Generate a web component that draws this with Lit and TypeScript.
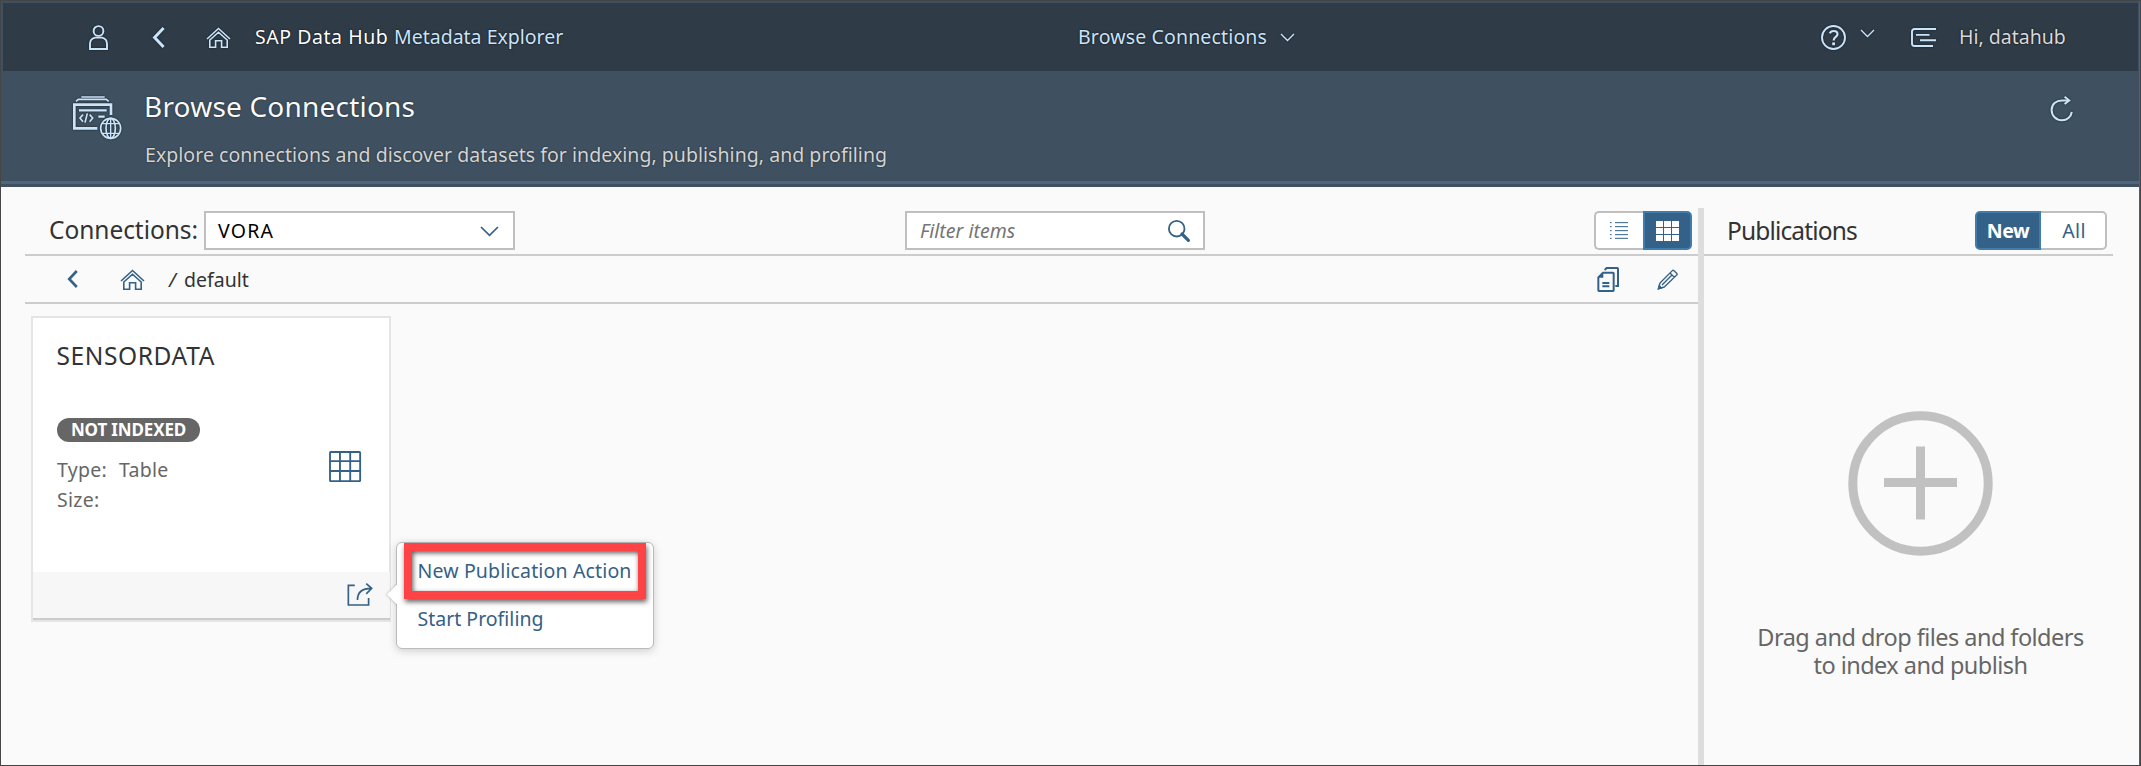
import { LitElement, html, svg, css } from "lit";
import { customElement, property } from "lit/decorators.js";

const home = svg`<path d="M1 12 12.5 1.5 24 12" /><path d="M3.8 13 12.5 5.2 21.2 13V20.2H15.6V13.8H9.6V20.2H3.8Z" />`;
const slim = svg`<path d="M1 1 7.5 7.5 14 1" />`;

const ICONS: Record<string, { w: number; h: number; box: string; sw: number; art: unknown }> = {
  person: { w: 19, h: 25, box: "0 0 19 25", sw: 1.9, art: svg`<circle cx="9.5" cy="6" r="4.9" /><path d="M1 24V19C1 15.6 3 13.2 6 12.6H13C16 13.2 18 15.6 18 19V24Z" />` },
  back: { w: 13, h: 21, box: "0 0 13 21", sw: 3, art: svg`<path d="M11.6 1 2.6 10.5 11.6 20" />` },
  home: { w: 25, h: 21, box: "0 0 25 21", sw: 1.6, art: home },
  down: { w: 15, h: 9, box: "0 0 15 9", sw: 1.4, art: slim },
  help: { w: 25, h: 25, box: "0 0 25 25", sw: 1.9, art: svg`<circle cx="12.5" cy="12.5" r="11.5" /><path d="M8.7 8.4C9.5 6.7 10.9 6 12.6 6 14.9 6 16.5 7.2 16.5 9.2 16.5 11.9 12.6 11.9 12.6 15.4" stroke-width="2.2" /><path d="M12.6 17.4V20.2" stroke-width="2.8" />` },
  menu: { w: 25, h: 19, box: "0 0 25 19", sw: 1.9, art: svg`<path d="M25 1H3.5C2 1 1 2 1 3.5V15.5C1 17 2 18 3.5 18H22M5 6.9H18.5M9 12.2H25" />` },
  refresh: { w: 24, h: 26, box: "0 0 24 26", sw: 2, art: svg`<path d="M21.8 16C21 21 17 24.3 12 24.3 6 24.3 1.6 19.8 1.6 14 1.6 8 6 4.4 12 4.4H18" /><path d="M14.6 .8 19.2 4.4 14.6 8" />` },
  browse: {
    w: 49, h: 44, box: "39 33 147 132", sw: 8,
    art: svg`<path d="M64 36H134M48 49 55 43H139L146 49" stroke-width="5" /><path d="M112 130H43V59H153V90" /><path d="M57 76H140M115 95H134" stroke-width="7" />
      <path d="M69 89 60 99 69 110M89 89 98 99 89 110M82 85 75 113" stroke-width="5" />
      <circle cx="152" cy="130" r="30" stroke-width="5" /><ellipse cx="152" cy="130" rx="14" ry="30" stroke-width="5" /><path d="M127 116H177M127 145H177M152 100V160" stroke-width="4" />`,
  },
  chevron: { w: 19, h: 11, box: "0 0 19 11", sw: 1.7, art: svg`<path d="M1 1 9.5 9.4 18 1" />` },
  search: { w: 22, h: 22, box: "0 0 22 22", sw: 1.8, art: svg`<circle cx="8.7" cy="8.7" r="7.8" /><path d="M14 14 20.4 20.4" stroke-width="3.2" stroke-linecap="round" />` },
  crumbBack: { w: 11, h: 18, box: "0 0 11 18", sw: 2.6, art: svg`<path d="M9.8 1 2.2 9 9.8 17" />` },
  list: { w: 18, h: 17, box: "89 55 54 51", sw: 3, art: svg`<path d="M89 57H94M104 57H143M89 69H94M104 69H143M89 81H94M104 81H143M89 93H94M104 93H143M89 104H94M104 104H143" />` },
  tiles: { w: 23, h: 20, box: "0 0 23 20", sw: 0, art: svg`<path class="fill" d="M0 0h7v6H0zM8 0h7v6H8zM16 0h7v6h-7zM0 7h7v6H0zM8 7h7v6H8zM16 7h7v6h-7zM0 14h7v6H0zM8 14h7v6H8zM16 14h7v6h-7z" />` },
  copy: { w: 22, h: 25, box: "50 186 66 75", sw: 6, art: svg`<path d="M54 217 68 203H98Q100 203 100 205V256Q100 258 98 258H56Q54 258 54 256Z" /><path class="fill" d="M52 218 69 201V218Z" /><path d="M73 195 79 189H111Q113 189 113 191V243H105" /><path d="M66 234H87M66 244H87" />` },
  pencil: { w: 21, h: 21, box: "231 192 63 63", sw: 4, art: svg`<path d="M240 234 277 197Q279 194 282 197L290 205Q293 208 290 210L253 246M240 234 235 251 253 246M270 204 283 217M246 240 276 210" /><path class="fill" d="M233 254 237 238 248 250Z" />` },
  table: { w: 32, h: 31, box: "28 33 95 93", sw: 5.5, art: svg`<rect x="31" y="36" width="89.500" height="87.500" rx="2" /><path d="M60.500 35V124M91 35V124M30 63.500H121M30 93H121" />` },
  share: { w: 26, h: 23, box: "81 430 77 68", sw: 5, art: svg`<path d="M104 437H85V495H145V474" /><path d="M112 480C112 460 124 446 153 446M138 432 154 446 138 462" />` },
  plus: { w: 145, h: 145, box: "0 0 145 145", sw: 9, art: svg`<circle cx="72.500" cy="72.500" r="67.700" /><path d="M72.500 35.500V108.500M36 71.500H109" />` },
};

@customElement("ui-icon")
class UiIcon extends LitElement {
  @property() name = "";
  static styles = css`
    :host { display: block; flex: none; }
    svg { display: block; fill: none; stroke: currentColor; overflow: visible; }
    .fill { fill: currentColor; stroke: none; }
  `;
  render() {
    const i = ICONS[this.name];
    return html`<svg width=${i.w} height=${i.h} viewBox=${i.box} stroke-width=${i.sw} preserveAspectRatio="none">${i.art}</svg>`;
  }
}

@customElement("app-root")
class AppRoot extends LitElement {
  static styles = css`
    :host {
      display: flex; flex-direction: column; box-sizing: border-box; width: 2141px; height: 766px;
      border: 1px solid #444648; overflow: hidden; background: #fafafa; box-shadow: inset -1px 0 #1c6db3;
      font: 19.5px/30px "Noto Sans", sans-serif; color: #333; white-space: nowrap;
    }
    * { box-sizing: border-box; }
    .shell { margin-right: 1px; background: #3f5161; padding: 2px 1px 0 2px; height: 186px; display: flex; flex-direction: column; }
    .bar { height: 68px; background: #2f3c48; display: flex; align-items: center; color: #cae4fb; padding: 0 71px 0 86px; text-shadow: 0 0 2px #000; }
    .bar ui-icon, .head ui-icon { filter: drop-shadow(0 0 1px rgba(0, 0, 0, .6)); }
    .g-back { margin-left: 44px; }
    .g-home { margin-left: 41px; }
    .product { margin-left: 24px; width: 823px; letter-spacing: 0; }
    .product b { font-weight: 400; color: #fff; letter-spacing: .55px; }
    .crumb-title { width: 202px; letter-spacing: .15px; }
    .help { margin-left: auto; }
    .help-down { margin: 0 36px 8px 14px; }
    .user { margin-left: 23px; color: #d9d9d9; width: 108px; }
    .head { flex: 1; display: flex; align-items: flex-start; padding: 25px 64px 0 70px; color: #cae4fb; }
    .titles { margin-left: 22px; flex: 1; text-shadow: 0 0 2px rgba(0, 0, 0, .6); }
    h1 { margin: -10px 0 0; font-size: 28px; line-height: 40px; font-weight: 400; color: #fafafa; letter-spacing: .2px; }
    .titles p { margin: 14px 0 0 1px; color: #d3d3d3; letter-spacing: .04px; }
    .stripe { height: 6px; margin: 0 -1px 0 -2px; background: #4e657c; border-bottom: 3px solid #3f5161; }
    .work { flex: 1; display: flex; margin-right: 1px; }
    .main { width: 1697px; padding-left: 24px; }
    .tools { height: 69px; padding: 24px 0 4px; border-bottom: 2px solid #ccc; display: flex; align-items: center; }
    .lbl { font-size: 24.5px; letter-spacing: -.05px; margin-left: 24px; width: 155px; position: relative; top: -1px; }
    .field { height: 39px; border: 2px solid #bfbfbf; background: #fff; display: flex; align-items: center; justify-content: space-between; color: #346187; }
    .select { width: 311px; padding: 2px 14px 0 12px; }
    .select span { color: #000; letter-spacing: 1.2px; position: relative; top: -1px; }
    .filter { width: 300px; margin-left: 390px; padding: 0 13px 0 13px; }
    .filter i { color: #757575; }
    .seg { display: flex; margin-left: auto; height: 39px; color: #346187; }
    .seg div { display: flex; align-items: center; justify-content: center; border: 2px solid #bfbfbf; background: #fff; border-radius: 5px; }
    .seg .first { border-top-right-radius: 0; border-bottom-right-radius: 0; }
    .seg .last { border-top-left-radius: 0; border-bottom-left-radius: 0; }
    .seg .off.first { border-right: 0; padding-right: 2px; }
    .seg .off.last { border-left: 0; padding-left: 2px; }
    .seg .on { background: #346187; border-color: #427cac; color: #fff; font-weight: 700; }
    .views { margin-right: 6px; }
    .views div { width: 49px; }
    .path { height: 48px; border-bottom: 2px solid #ccc; display: flex; align-items: center; padding: 0 20px 0 42px; color: #346187; }
    .path ui-icon:nth-child(2) { margin-left: 42px; }
    .path span { color: #333; position: relative; top: 1px; }
    .slash { margin-left: 24px; width: 15px; font-style: italic; }
    .copy { margin-left: auto; margin-right: 38px; }
    .cards { padding: 12px 0 0 6px; }
    .card { position: relative; width: 360px; height: 306px; border: 2px solid #e5e5e5; background: #fff; display: flex; flex-direction: column; }
    .card h2 { margin: 23px 0 0 23.5px; font-size: 24.5px; line-height: 30px; font-weight: 400; letter-spacing: .6px; }
    .badge { margin: 47px 0 0 24px; width: 143px; height: 24px; border-radius: 12px; background: #666; color: #fff; font-size: 17px; line-height: 24px; font-weight: 700; text-align: center; letter-spacing: -.15px; }
    .facts { display: flex; justify-content: space-between; margin: 9px 28px 0 24px; color: #666; }
    .facts dl { margin: 4px 0 0; display: grid; grid-template-columns: 62px auto; letter-spacing: .25px; }
    .facts dd { margin: 0; }
    .facts ui-icon { color: #346187; }
    .foot { margin: auto -1px 0 0; height: 48px; background: #f7f7f7; border-bottom: 2px solid #ccc; display: flex; align-items: center; justify-content: flex-end; padding: 0 17px 2px 0; color: #346187; }
    .menu { position: absolute; left: 363px; top: 224px; width: 258px; height: 107px; border: 1px solid #bbb; border-radius: 6px; background: #fff; padding: 4px 0 0 20.5px; box-shadow: 0 2px 8px rgba(0, 0, 0, .18); color: #346187; line-height: 48px; letter-spacing: .15px; }
    .menu::before { content: ""; position: absolute; left: -7px; top: 44px; width: 15px; height: 15px; background: #fff; transform: rotate(45deg); box-shadow: -1px 1px 2px rgba(0, 0, 0, .15); }
    .menu div { position: relative; }
    .menu div + div { letter-spacing: 0; }
    .mark { position: absolute; left: 371px; top: 225px; width: 242px; height: 56px; border: 8px solid #fd4345; box-shadow: 1px 3px 5px rgba(0, 0, 0, .6), inset 1px 2px 5px rgba(0, 0, 0, .65); }
    .split { width: 6px; margin-top: 21px; background: #ddd; }
    .side { flex: 1; display: flex; flex-direction: column; }
    .side .tools { width: 409px; padding-left: 23px; padding-right: 6px; }
    .side h3 { margin: 0; font-size: 24.5px; font-weight: 400; letter-spacing: -.85px; }
    .side .seg div { width: 67px; }
    .side .seg .on { width: 66px; letter-spacing: -.4px; }
    .side .seg .off { width: 66px; letter-spacing: .4px; padding-top: 1px; }
    .drop { display: flex; flex-direction: column; align-items: center; padding: 155px 2px 0 0; color: #c1c1c1; }
    .drop p { margin: 67px 0 0; font-size: 23.5px; line-height: 28px; letter-spacing: -.54px; text-align: center; color: #666; }
  `;
  render() {
    return html`
      <div class="shell">
        <div class="bar">
          <ui-icon name="person"></ui-icon><ui-icon class="g-back" name="back"></ui-icon><ui-icon class="g-home" name="home"></ui-icon>
          <span class="product"><b>SAP Data Hub </b>Metadata Explorer</span>
          <span class="crumb-title">Browse Connections</span><ui-icon name="down"></ui-icon>
          <ui-icon class="help" name="help"></ui-icon><ui-icon class="help-down" name="down"></ui-icon>
          <ui-icon name="menu"></ui-icon><span class="user">Hi, datahub</span>
        </div>
        <div class="head">
          <ui-icon name="browse"></ui-icon>
          <div class="titles"><h1>Browse Connections</h1><p>Explore connections and discover datasets for indexing, publishing, and profiling</p></div>
          <ui-icon name="refresh"></ui-icon>
        </div>
        <div class="stripe"></div>
      </div>
      <div class="work">
        <div class="main">
          <div class="tools">
            <span class="lbl">Connections:</span>
            <div class="field select"><span>VORA</span><ui-icon name="chevron"></ui-icon></div>
            <div class="field filter"><i>Filter items</i><ui-icon name="search"></ui-icon></div>
            <div class="seg views"><div class="off first"><ui-icon name="list"></ui-icon></div><div class="on last"><ui-icon name="tiles"></ui-icon></div></div>
          </div>
          <div class="path">
            <ui-icon name="crumbBack"></ui-icon><ui-icon name="home"></ui-icon>
            <span class="slash">/</span><span>default</span>
            <ui-icon class="copy" name="copy"></ui-icon><ui-icon name="pencil"></ui-icon>
          </div>
          <div class="cards">
            <div class="card">
              <h2>SENSORDATA</h2>
              <div class="badge">NOT INDEXED</div>
              <div class="facts"><dl><dt>Type:</dt><dd>Table</dd><dt>Size:</dt><dd></dd></dl><ui-icon name="table"></ui-icon></div>
              <div class="foot"><ui-icon name="share"></ui-icon></div>
              <div class="menu"><div>New Publication Action</div><div>Start Profiling</div></div>
              <div class="mark"></div>
            </div>
          </div>
        </div>
        <div class="split"></div>
        <div class="side">
          <div class="tools"><h3>Publications</h3><div class="seg"><div class="on first">New</div><div class="off last">All</div></div></div>
          <div class="drop"><ui-icon name="plus"></ui-icon><p>Drag and drop files and folders<br />to index and publish</p></div>
        </div>
      </div>
    `;
  }
}
